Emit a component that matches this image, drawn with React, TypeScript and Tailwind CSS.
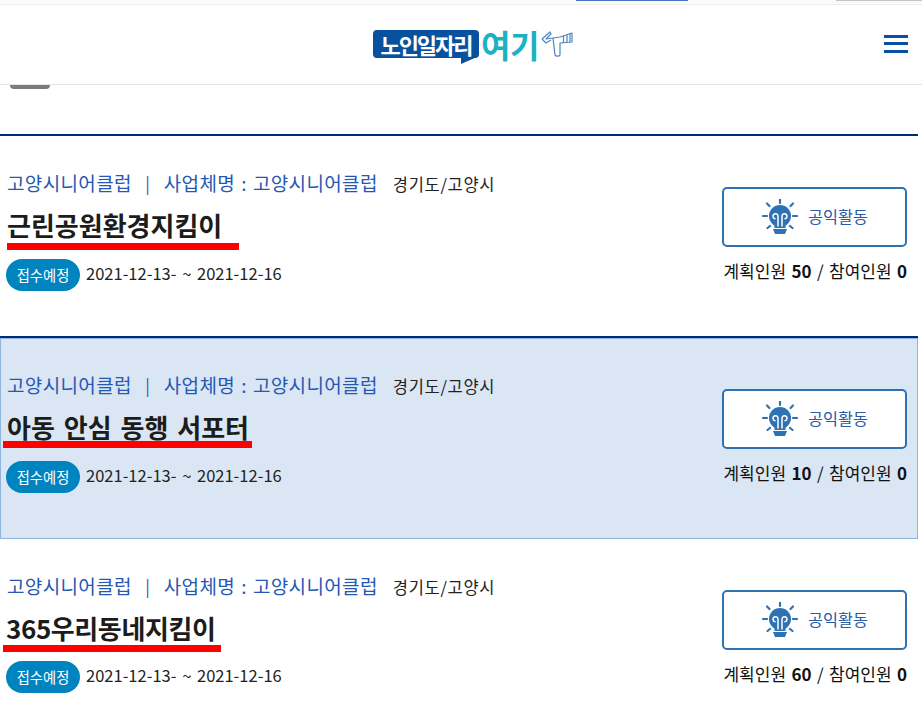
const font = { fontFamily: '"Noto Sans CJK KR", "Noto Sans", sans-serif' };

function BulbIcon() {
  return (
    <svg width="36" height="36" viewBox="0 0 36 36" fill="none" className="shrink-0">
      <path
        d="M18 .5V4M1 17h4M31 17h4M5 4.500L7.500 7M31 4.500L28.500 7M5.500 29L8 27M30.500 29L28 27"
        stroke="#2e72b3"
        strokeWidth="2.200"
        strokeLinecap="round"
      />
      <circle cx="18" cy="17" r="11" fill="#2e72b3" />
      <path d="M12.500 24h11v5h-11z" fill="#2e72b3" />
      <path d="M11 30h14l-2 5H13z" fill="#2e72b3" />
      <path
        d="M16 27v-9.500c0-4-5-3.500-5 0 0 1.300.8 2 2 2.200M20 27v-9.500c0-4 5-3.500 5 0 0 1.300-.8 2-2 2.200"
        stroke="#fff"
        strokeWidth="1.500"
        strokeLinecap="round"
      />
    </svg>
  );
}

function HandIcon() {
  return (
    <svg width="34" height="28" viewBox="0 0 34 28" fill="none" stroke="#4d86c0" strokeWidth="1.200" strokeLinejoin="round">
      <path d="M1 9L9 2l1 2-5 5 7-1 2 17c.5 1.500 4.500 1.500 5 0V13l12-1V3L19 7l-7 1" />
      <path d="M22.500 13V6M26 12.500V5M29 12V4" />
      <path d="M1 9l4 4 5-3" />
    </svg>
  );
}

function Logo() {
  return (
    <div className="flex items-center">
      <div className="relative">
        <div className="flex h-[28px] w-[106px] items-center justify-center rounded-[4px] bg-[#07519f] text-[22px] font-bold tracking-[-2px] text-white">
          노인일자리
        </div>
        <div className="absolute left-[88px] top-[27px] h-0 w-0 border-r-[16px] border-t-[7px] border-r-transparent border-t-[#07519f]" />
      </div>
      <div className="ml-[2px] w-[60px] text-[32px] font-bold leading-none tracking-[-.5px] text-[#1cb2c4]">여기</div>
      <HandIcon />
    </div>
  );
}

type Item = {
  title: string;
  planned: number;
  underline: string;
  titleClass: string;
  highlight?: boolean;
};

const items: Item[] = [
  { title: "근린공원환경지킴이", planned: 50, underline: "left-[7px] top-[107px] w-[232px]", titleClass: "pl-[7px] mb-[18px]" },
  { title: "아동 안심 동행 서포터", planned: 10, underline: "left-[3px] top-[103px] w-[249px]", titleClass: "pl-[7px] mb-[18px] [word-spacing:3px]", highlight: true },
  { title: "365우리동네지킴이", planned: 60, underline: "left-[3px] top-[106px] w-[218px]", titleClass: "pl-[6px] mb-[17px] tracking-[-.4px]" },
];

function Row({ item }: { item: Item }) {
  return (
    <div
      className={`relative flex justify-between pr-[11px] ${
        item.highlight ? "h-[201px] bg-[#dae6f3] shadow-[inset_0_0_0_1px_#8fb4db]" : "h-[200px] bg-white"
      }`}
    >
      <div className="flex flex-col pt-[36px]">
        <div className="flex h-[24px] items-center pb-[3px] pl-[7px] text-[19px] leading-none tracking-[.35px] [word-spacing:1.500px] text-[#2458b4]">
          <span>고양시니어클럽</span>
          <span className="mx-[13.500px] text-[17px]">|</span>
          <span>사업체명 : 고양시니어클럽</span>
          <span className="ml-[15px] pt-[3px] text-[16.500px] tracking-[.7px] text-[#222]">경기도/고양시</span>
        </div>
        <div className={`mt-[13px] h-[32px] text-[26px] font-bold leading-[32px] text-[#1c1c1c] ${item.titleClass}`}>
          {item.title}
        </div>
        <div className="flex items-center pl-[6px]">
          <span className="flex h-[32px] w-[74px] items-center justify-center rounded-[16px] bg-[#0084c0] text-[14.300px] text-white">
            접수예정
          </span>
          <span className="ml-[6px] pb-[3px] text-[16.500px] [word-spacing:2px] text-[#222]">2021-12-13- ~ 2021-12-16</span>
        </div>
      </div>
      <div className={`absolute h-[7px] bg-[#ff0000] ${item.underline}`} />
      <div className="flex w-[185px] flex-col pt-[51px]">
        <div className="flex h-[60px] items-center justify-center gap-[10px] rounded-[5px] border-2 border-[#2e72b3] bg-white pl-[1px] text-[16.300px] text-[#2a5ca8]">
          <BulbIcon />
          <span className="pb-[1px]">공익활동</span>
        </div>
        <div className="mt-[11px] whitespace-nowrap text-right text-[17px] leading-[26px] [word-spacing:1.600px] text-[#111]">
          계획인원 <b>{item.planned}</b> / 참여인원 <b>0</b>
        </div>
      </div>
    </div>
  );
}

export default function App() {
  return (
    <div className="h-[723px] w-[922px] overflow-hidden bg-white" style={font}>
      <div className="relative h-[5px] border-b border-[#eeeeee] bg-[#fafafa]">
        <div className="absolute left-[576px] top-0 h-[1px] w-[112px] bg-[#4a6fc0]" />
        <div className="absolute right-0 top-0 h-[1px] w-[86px] bg-[#c4c4c4]" />
      </div>

      <header className="flex h-[80px] items-center justify-between border-b border-[#e3e5ea] bg-white pl-[373px] pr-[14px]">
        <div className="-mt-[1px]">
          <Logo />
        </div>
        <div className="-mt-[2px] flex w-[24px] flex-col">
          <div className="h-[3px] bg-[#07519f]" />
          <div className="mt-[4px] h-[3px] bg-[#07519f]" />
          <div className="mt-[5px] h-[3px] bg-[#07519f]" />
        </div>
      </header>

      <div className="h-[49px]">
        <div className="ml-[10px] h-[4px] w-[40px] rounded-b-[14px] bg-[#7c7c7c]" />
      </div>

      <div className="w-[918px]">
        {items.map((item, i) => (
          <div key={item.title} className={i < 2 ? "border-t-2 border-[#002a7c]" : ""}>
            <Row item={item} />
          </div>
        ))}
      </div>
    </div>
  );
}
